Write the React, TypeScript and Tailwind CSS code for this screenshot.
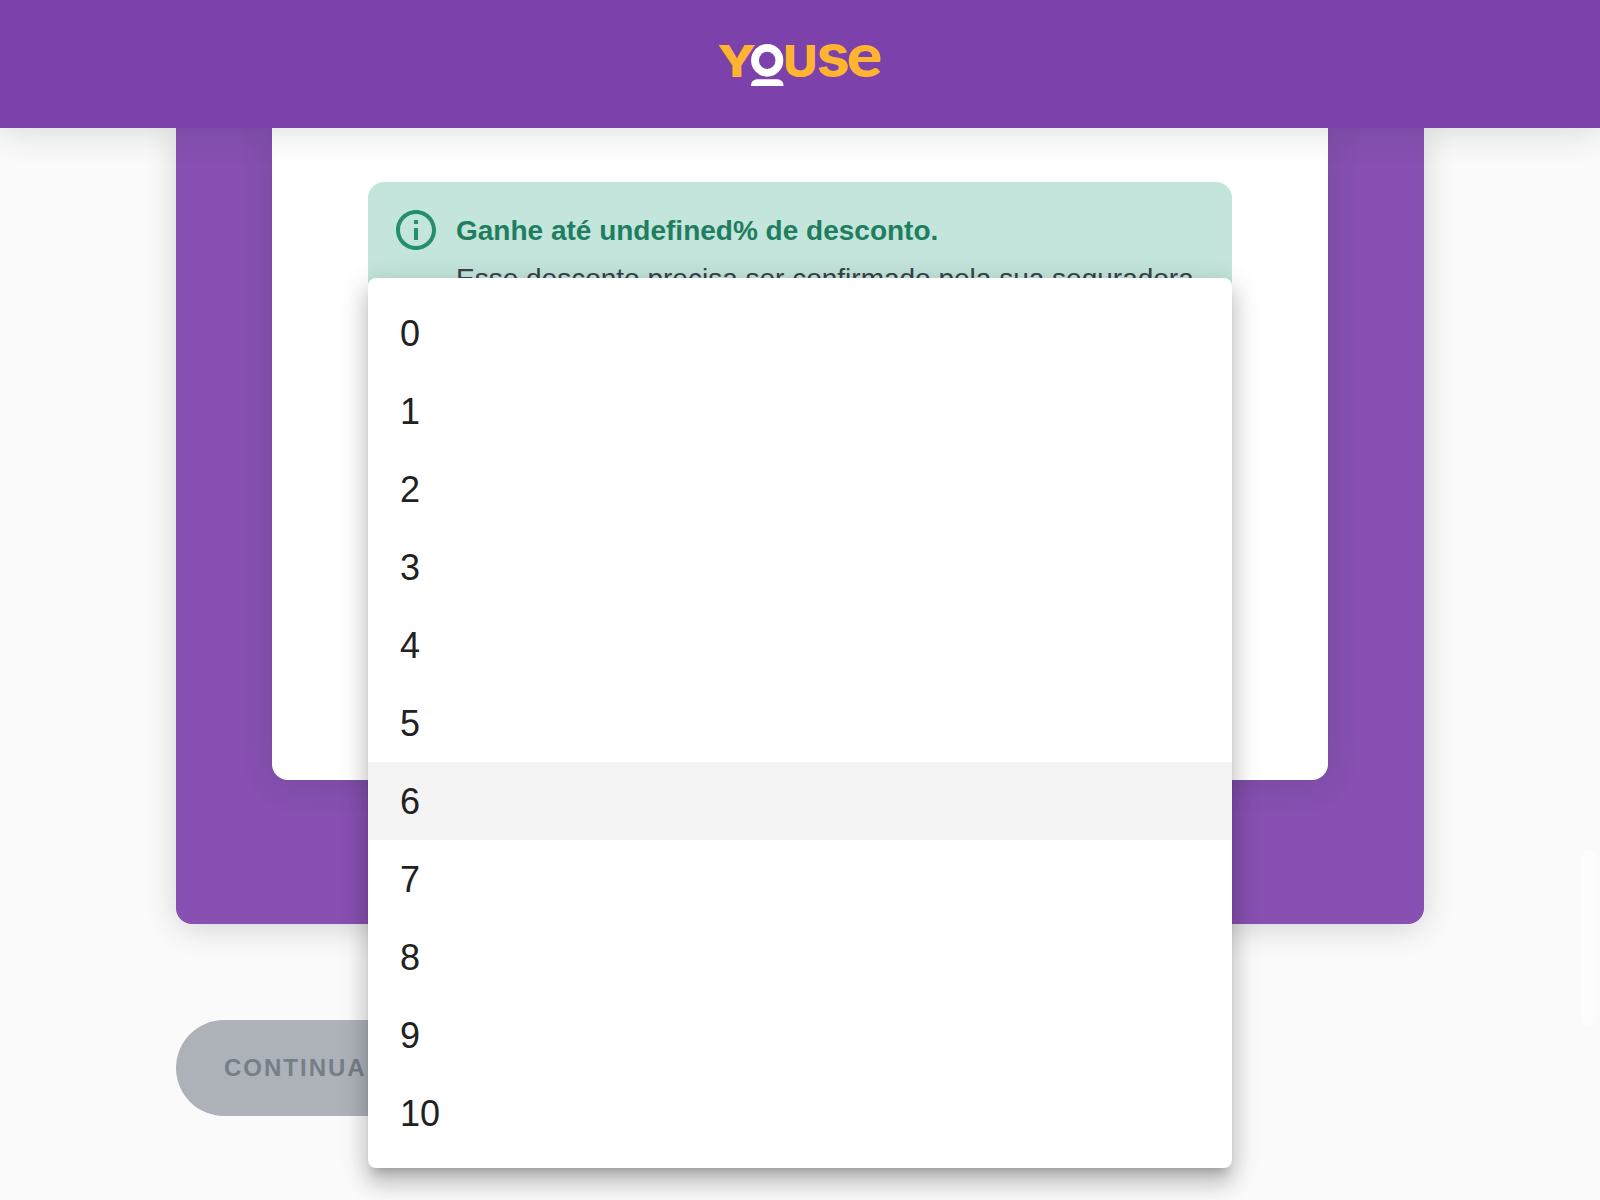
const options = ['0', '1', '2', '3', '4', '5', '6', '7', '8', '9', '10'];
const selected = '6';

function Logo() {
  return (
    <svg width="168" height="64" viewBox="716 32 168 64" overflow="visible" role="img" aria-label="Youse">
      <g fill="#ffb431">
        <text className="font-['Inter',sans-serif]" transform="translate(717.3 77) scale(1.17 1)" fontSize="44" fontWeight="800">Y</text>
        <text className="font-['Inter',sans-serif]" transform="translate(783.2 76.5) scale(1.08 1)" fontSize="43.500" fontWeight="800">U</text>
        <text className="font-['Inter',sans-serif]" transform="translate(816.5 76.300) scale(1.05 1)" fontSize="57" fontWeight="700">s</text>
        <text className="font-['Lato',sans-serif]" transform="translate(846.7 76.500) scale(1.09 1)" fontSize="61" fontWeight="900">e</text>
      </g>
      <ellipse cx="767.2" cy="60.3" rx="12.2" ry="12.5" fill="none" stroke="#fff" strokeWidth="7.8" />
      <path d="M751 86C751 81.500 753.500 79.300 758 79.300H776.500C781 79.300 783.500 81.500 783.500 86Z" fill="#fff" />
    </svg>
  );
}

function InfoIcon() {
  return (
    <svg width="48" height="48" viewBox="0 0 24 24" fill="#238f6c" className="shrink-0">
      <path d="M11 7h2v2h-2zm0 4h2v6h-2zm1-9C6.480 2 2 6.480 2 12s4.480 10 10 10 10-4.480 10-10S17.520 2 12 2zm0 18c-4.410 0-8-3.590-8-8s3.590-8 8-8 8 3.590 8 8-3.590 8-8 8z" />
    </svg>
  );
}

export default function App() {
  return (
    <div className="relative h-[1200px] w-[1600px] overflow-hidden bg-[#fafafa] font-['Liberation_Sans',Arial,sans-serif]">
      <header className="relative z-10 flex h-32 justify-center bg-[#7d41ab] pt-8 shadow-[0_4px_32px_rgba(38,50,56,0.16)]">
        <Logo />
      </header>

      <main className="px-44">
        <section className="h-[796px] rounded-b-2xl bg-[#8750b2] px-24 shadow-[0_4px_32px_rgba(0,0,0,0.16)]">
          <div className="h-[652px] rounded-b-2xl bg-white px-24 pt-[54px] shadow-[0_4px_32px_rgba(38,50,56,0.16)]">
            <div className="flex h-60 gap-4 rounded-2xl bg-[#c3e5db] px-6 py-6">
              <InfoIcon />
              <div className="pt-px text-[28px] leading-[48px] whitespace-nowrap">
                <p className="font-bold text-[#217d5f]">Ganhe até undefined% de desconto.</p>
                <p className="text-[#37424d]">Esse desconto precisa ser confirmado pela sua seguradora</p>
              </div>
            </div>
          </div>
        </section>
        <button className="mt-24 flex h-24 items-center rounded-full bg-[#adb2b9] px-12 text-2xl font-bold tracking-[2px] text-[#757f87]">
          CONTINUAR
        </button>
      </main>

      <ul className="absolute top-[278px] left-[368px] z-20 h-[890px] w-[864px] rounded-lg bg-white py-4 shadow-[0_10px_10px_-6px_rgba(0,0,0,0.2),0_16px_20px_2px_rgba(0,0,0,0.14),0_6px_28px_4px_rgba(0,0,0,0.12)]">
        {options.map((value) => (
          <li
            key={value}
            className={`flex h-[78px] items-center px-8 pt-0.5 text-4xl text-[#212121] ${value === selected ? 'bg-[#f4f4f4]' : ''}`}
          >
            {value}
          </li>
        ))}
      </ul>

      <div className="absolute top-[850px] left-[1582px] h-[176px] w-[14px] rounded-full bg-[#fdfdfd]" />
    </div>
  );
}
